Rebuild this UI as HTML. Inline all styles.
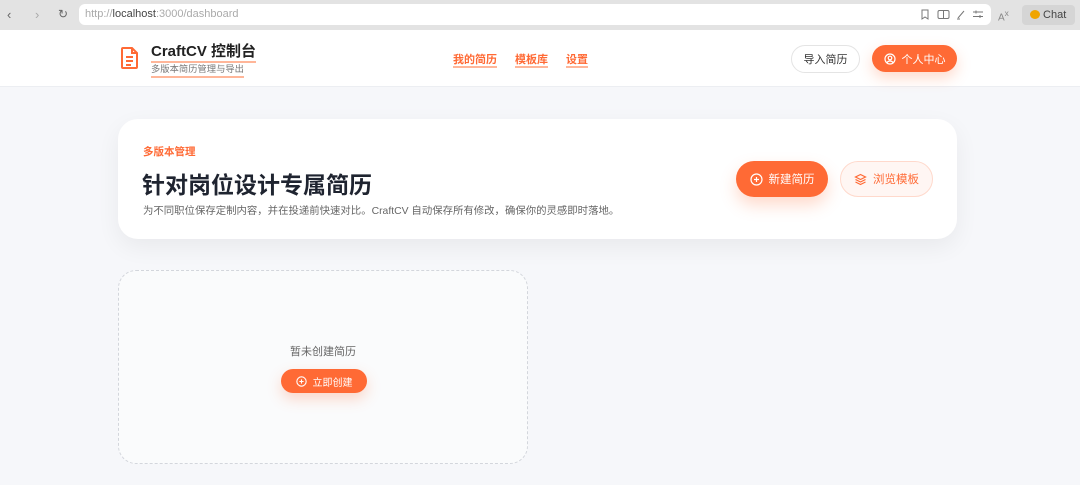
<!DOCTYPE html>
<html><head><meta charset="utf-8"><style>
*{box-sizing:border-box;margin:0;padding:0}
body{width:1080px;height:485px;overflow:hidden;background:#f6f7fa;font-family:"Liberation Sans","Noto Sans CJK SC",sans-serif;position:relative}
.bar{position:absolute;left:0;top:0;width:1080px;height:30px;background:#e3e3e3}
.url{position:absolute;left:79px;top:4px;width:912px;height:21px;background:#fff;border-radius:6px;font-size:11px;color:#aaa;line-height:21px;padding-left:6px}
.url b{color:#444;font-weight:normal}
.hdr{position:absolute;top:30px;left:0;width:1080px;height:57px;background:#fff;border-bottom:1px solid #eceef2}
.o{color:#ff6a35}
.btn{position:absolute;border-radius:20px;font-size:12px;display:flex;align-items:center;justify-content:center;gap:6px}
.card{position:absolute;left:118px;top:119px;width:839px;height:120px;background:#fff;border-radius:20px;box-shadow:0 8px 24px rgba(0,0,0,.06)}
.empty{position:absolute;left:118px;top:270px;width:410px;height:194px;border:1px dashed #d3d6dc;border-radius:18px;background:#fafbfc}
</style></head><body>
<div class="bar">
<span style="position:absolute;left:7px;top:7px;font-size:13px;color:#666">‹</span>
<span style="position:absolute;left:35px;top:7px;font-size:13px;color:#aaa">›</span>
<span style="position:absolute;left:58px;top:7px;font-size:12px;color:#666">↻</span>
<div class="url">http://<b>localhost</b>:3000/dashboard
<svg style="position:absolute;left:840px;top:5px" width="70" height="11" viewBox="0 0 70 11" fill="none" stroke="#777" stroke-width="1"><path d="M3 1h6v9l-3-2-3 2z"/><rect x="19" y="1.5" width="11" height="8" rx="1.5"/><path d="M24.5 1.5v8"/><path d="M39 9l6-7M38 10h3"/><path d="M54 3h10M54 7.5h10M57 1.5v3M61 6v3"/></svg></div>
<span style="position:absolute;left:998px;top:8px;font-size:10px;color:#888">A<sup>x</sup></span>
<div style="position:absolute;left:1022px;top:5px;width:53px;height:20px;background:#d5d5d5;border-radius:4px;font-size:11px;color:#444;line-height:20px;padding-left:8px"><span style="display:inline-block;width:10px;height:9px;background:#f0a500;border-radius:50%;vertical-align:-1px"></span> Chat</div>
</div>
<div class="hdr">
<svg style="position:absolute;left:120px;top:16px" width="20" height="24" viewBox="0 0 20 24" fill="none" stroke="#ff6a35" stroke-width="2"><path d="M3 2h9l5 5v14a1 1 0 0 1-1 1H3a1 1 0 0 1-1-1V3a1 1 0 0 1 1-1z"/><path d="M12 2v5h5M6 11h7M6 15h7M6 19h5"/></svg>
<div style="position:absolute;left:151px;top:13px;font-size:15px;font-weight:bold;color:#222;border-bottom:2px solid #ffb699;line-height:18px">CraftCV 控制台</div>
<div style="position:absolute;left:151px;top:33px;font-size:9.3px;color:#777;border-bottom:2px solid #ffb699;line-height:13px">多版本简历管理与导出</div>
<div style="position:absolute;left:453px;top:21px;font-size:11px;font-weight:bold" class="o"><span style="border-bottom:2px solid #ffb699">我的简历</span><span style="margin-left:18px;border-bottom:2px solid #ffb699">模板库</span><span style="margin-left:18px;border-bottom:2px solid #ffb699">设置</span></div>
<div class="btn" style="left:791px;top:15px;width:69px;height:28px;border:1px solid #e4e4e4;color:#333;font-size:11px">导入简历</div>
<div class="btn" style="left:872px;top:15px;width:85px;height:27px;background:#ff6a35;color:#fff;font-size:11px;box-shadow:0 6px 14px rgba(255,106,53,.25)"><svg width="12" height="12" viewBox="0 0 12 12" fill="none" stroke="#fff" stroke-width="1.2"><circle cx="6" cy="6" r="5"/><circle cx="6" cy="5" r="1.8"/><path d="M3 9.5c1.5-2 4.5-2 6 0"/></svg>个人中心</div>
</div>
<div class="card">
<div style="position:absolute;left:25px;top:25px;font-size:10.5px;font-weight:bold" class="o">多版本管理</div>
<div style="position:absolute;left:24px;top:47px;font-size:23px;font-weight:bold;color:#1f2430">针对岗位设计专属简历</div>
<div style="position:absolute;left:25px;top:83px;font-size:10.4px;color:#666">为不同职位保存定制内容，并在投递前快速对比。CraftCV 自动保存所有修改，确保你的灵感即时落地。</div>
<div class="btn" style="left:618px;top:42px;width:92px;height:36px;background:#ff6a35;color:#fff;box-shadow:0 8px 16px rgba(255,106,53,.25);font-size:11.5px"><svg width="13" height="13" viewBox="0 0 13 13" fill="none" stroke="#fff" stroke-width="1.2"><circle cx="6.5" cy="6.5" r="5.5"/><path d="M6.5 4v5M4 6.5h5"/></svg>新建简历</div>
<div class="btn" style="left:722px;top:42px;width:93px;height:36px;background:#fff6f3;border:1px solid #ffd9cc;color:#ff6a35;font-size:11.5px"><svg width="13" height="13" viewBox="0 0 13 13" fill="none" stroke="#ff6a35" stroke-width="1.2"><path d="M6.5 1.5l5 2.5-5 2.5-5-2.5z M1.5 6.5l5 2.5 5-2.5 M1.5 9l5 2.5 5-2.5"/></svg>浏览模板</div>
</div>
<div class="empty">
<div style="position:absolute;left:0;width:100%;top:72px;text-align:center;font-size:11px;color:#666">暂未创建简历</div>
<div class="btn" style="left:162px;top:98px;width:86px;height:24px;background:#ff6a35;color:#fff;font-size:10px;box-shadow:0 6px 14px rgba(255,106,53,.25)"><svg width="11" height="11" viewBox="0 0 13 13" fill="none" stroke="#fff" stroke-width="1.3"><circle cx="6.5" cy="6.5" r="5.5"/><path d="M6.5 4v5M4 6.5h5"/></svg>立即创建</div>
</div>
</body></html>
